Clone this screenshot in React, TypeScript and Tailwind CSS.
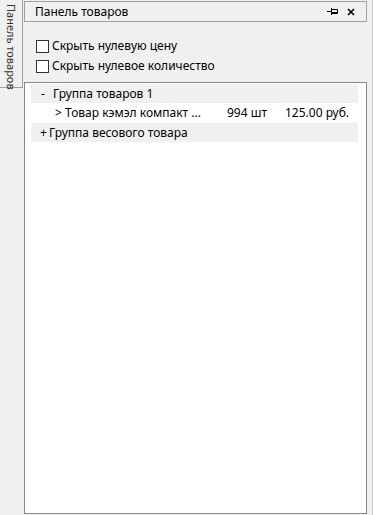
import { useState } from 'react'

const font = { fontFamily: '"Noto Sans", "DejaVu Sans", sans-serif' }

function Check({ label }: { label: string }) {
  const [on, setOn] = useState(false)
  return (
    <label className="flex items-center h-[20px] cursor-default" onClick={() => setOn(!on)}>
      <span className="w-[13px] h-[13px] border border-[#333333] bg-white mr-[3px]" />
      <span>{label}</span>
    </label>
  )
}

export default function App() {
  return (
    <div
      className="w-[373px] h-[515px] bg-[#f0f0f0] flex text-[12px] text-black overflow-hidden"
      style={font}
    >
      {/* side tab */}
      <div className="w-[24px] shrink-0">
        <div className="w-[23px] h-[88px] border-r border-b border-[#a0a0a0] flex items-start justify-center pt-[4px]">
          <span className="[writing-mode:vertical-rl] whitespace-nowrap text-[11px] text-[#333333] leading-[18px]">Панель товаров</span>
        </div>
      </div>

      {/* panel */}
      <div className="w-[343px] shrink-0 flex flex-col">
        <div className="mt-px h-[21px] border border-[#a0a0a0] flex items-center pl-[10px] pr-[6px]">
          <span className="flex-1">Панель товаров</span>
          <svg width="11" height="9" viewBox="0 0 11 9" className="mr-[9px]">
            <path d="M0 4.5H4M4.5 1V8M4.5 2.5H10.5V6.5H4.5" stroke="#000" strokeWidth="1" fill="none" />
            <path d="M4.5 5.5H10.5" stroke="#000" strokeWidth="1" />
          </svg>
          <svg width="8" height="8" viewBox="0 0 8 8" className="mr-[5px]">
            <path d="M1 1L7 7M7 1L1 7" stroke="#000" strokeWidth="1.6" />
          </svg>
        </div>

        <div className="pl-[12px] pt-[14px] pb-[6px]">
          <Check label="Скрыть нулевую цену" />
          <Check label="Скрыть нулевое количество" />
        </div>

        <div className="flex-1 mb-px border border-[#828790] bg-white pl-[6px] pr-[8px] pt-[1px]">
          <div className="h-[19px] bg-[#f0f0f0] flex items-center pl-[10px]">
            <span className="w-[12px]">-</span>
            <span>Группа товаров 1</span>
          </div>
          <div className="h-[20px] flex items-center pl-[24px]">
            <span className="w-[10px]">&gt;</span>
            <span className="w-[162px]">Товар кэмэл компакт ...</span>
            <span className="w-[58px]">994 шт</span>
            <span>125.00 руб.</span>
          </div>
          <div className="h-[19px] bg-[#f0f0f0] flex items-center pl-[9px]">
            <span className="w-[9px]">+</span>
            <span>Группа весового товара</span>
          </div>
        </div>
      </div>

      {/* right edge */}
      <div className="w-[6px] shrink-0 border-r border-[#c8c8c8]" />
    </div>
  )
}
